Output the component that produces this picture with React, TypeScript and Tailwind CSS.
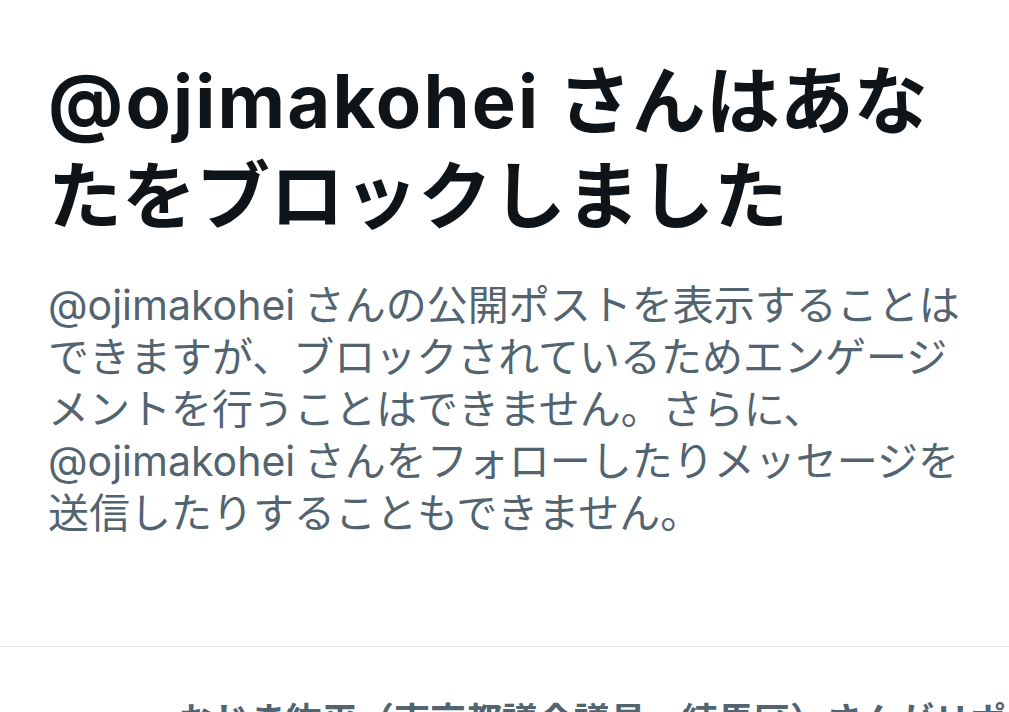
import React from 'react';

const handle = '@ojimakohei';

const App: React.FC = () => {
  return (
    <div
      className="w-[1009px] h-[712px] overflow-hidden bg-white"
      style={{ fontFamily: '"Inter", "Noto Sans CJK JP", sans-serif' }}
    >
      <div className="px-[48px] pt-[54px]">
        {/* Title */}
        <h1 className="text-[74px] leading-[95px] font-bold text-[#0f1419]">
          <div className="whitespace-nowrap">
            <span className="tracking-[2.2px]">{handle}</span> さんはあな
          </div>
          <div className="whitespace-nowrap">たをブロックしました</div>
        </h1>

        {/* Description */}
        <p className="mt-[35px] text-[41px] leading-[52px] text-[#536471] [word-spacing:-3px]">
          <span className="block whitespace-nowrap">{handle} さんの公開ポストを表示することは</span>
          <span className="block whitespace-nowrap">できますが、ブロックされているためエンゲージ</span>
          <span className="block whitespace-nowrap">メントを行うことはできません。さらに、</span>
          <span className="block whitespace-nowrap">{handle} さんをフォローしたりメッセージを</span>
          <span className="block whitespace-nowrap">送信したりすることもできません。</span>
        </p>
      </div>

      <div className="mt-[107px] border-t border-[#e5e7e9]" />

      {/* Repost label */}
      <div className="pl-[178px] pt-[50px] text-[36px] leading-[48px] font-bold text-[#536471] whitespace-nowrap">
        おじま紘平（東京都議会議員・練馬区）さんがリポスト
      </div>
    </div>
  );
};

export default App;
